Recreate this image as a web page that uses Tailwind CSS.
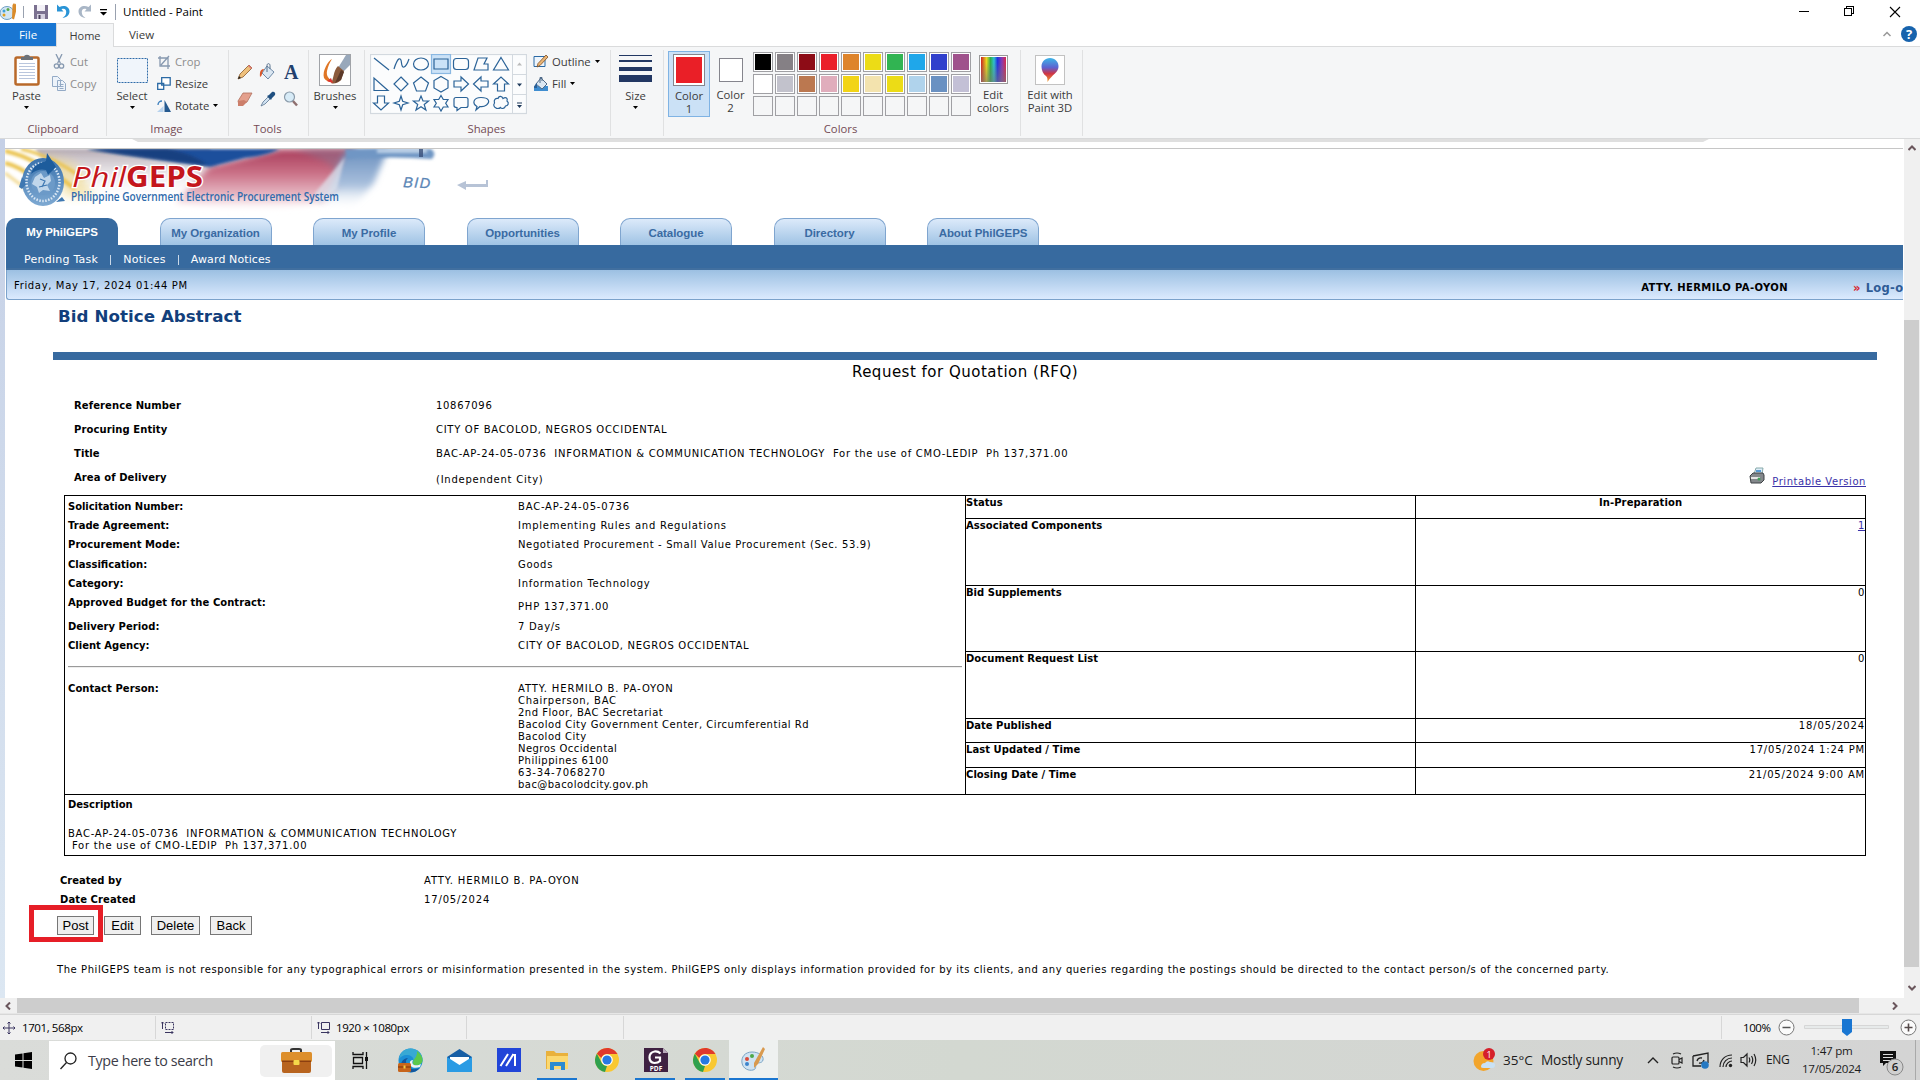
<!DOCTYPE html>
<html lang="en">
<head>
  <meta charset="UTF-8" />
  <meta name="viewport" content="width=device-width, initial-scale=1.0" />
  <title>Untitled - Paint</title>
  <script src="https://cdn.jsdelivr.net/npm/@tailwindcss/browser@4"></script>
</head>
<body class="w-[1920px] h-[1080px] overflow-hidden bg-white text-black font-['Open_Sans',sans-serif] text-[12px] flex flex-col">

  <!-- Title bar -->
  <header class="h-[23px] flex items-center shrink-0">
    <svg class="w-[17px] h-[18px]" viewBox="0 0 17 18"><ellipse cx="7" cy="10" rx="7" ry="6.5" fill="#d3e6f3" stroke="#6fa0c4"/><circle cx="4" cy="8" r="1.5" fill="#3ea0d8"/><circle cx="8" cy="6.5" r="1.5" fill="#58a848"/><circle cx="4" cy="12" r="1.5" fill="#e0a020"/><path d="M12.500 2l1.500-2 1 1.500 1-1v8l-2 8-2-1z" fill="#d98b2b"/></svg>
    <div class="w-px h-[12px] bg-gray-400 ml-[6px]"></div>
    <svg class="w-[14px] h-[14px] ml-[10px]" viewBox="0 0 14 14"><path d="M0 0h14v14H0z" fill="#7b7190"/><path d="M3 0h8v6H3z" fill="#f3f1f7"/><path d="M3 9h8v5H3z" fill="#d5d1e0"/><path d="M4.500 10h2v4h-2z" fill="#4a435e"/></svg>
    <svg class="w-[13px] h-[15px] ml-[9px]" viewBox="0 0 13 15"><path d="M0 .5v7h6.500L4.500 5.200C7.500 4 9.500 5.500 9.200 8.500c-.2 2.500-1.500 4-3.700 5.500C9.500 13.500 12.500 11 12.500 7.500 12.500 2.500 7 .8 2.500 3z" fill="#2a94d6"/></svg>
    <svg class="w-[13px] h-[15px] ml-[8px]" viewBox="0 0 13 15"><path d="M13 .5v7H6.500l2-2.300C5.500 4 3.500 5.500 3.800 8.500c.2 2.500 1.500 4 3.700 5.500C3.500 13.500.5 11 .5 7.500.5 2.500 6 .8 10.500 3z" fill="#a9b6c6"/></svg>
    <svg class="w-[7px] h-[7px] ml-[9px] mt-[2px]" viewBox="0 0 7 7"><path d="M0 0h7v1.200H0zM0 3h7L3.500 6.500z"/></svg>
    <div class="w-px h-[16px] bg-gray-400 ml-[8px]"></div>
    <span class="ml-[7px] text-[11.5px] leading-[22px]">Untitled - Paint</span>
    <svg class="w-[110px] h-[20px] ml-auto mr-[16px]" viewBox="0 0 110 20" fill="none" stroke="#000" shape-rendering="crispEdges"><path d="M5 9.500h10M50.500 6.500h7v7h-7zM52.500 6v-1.500h7v7H58"/><path d="M96 5l10 10M106 5L96 15" shape-rendering="auto" stroke-width="1.100"/></svg>
  </header>

  <!-- Ribbon tabs -->
  <nav class="h-[24px] flex shrink-0 border-b border-[#dadbdc] text-[#3b3b3b]">
    <div class="w-[56px] h-[23px] bg-[#1976d2] text-white text-center leading-[24px] text-[11.5px]">File</div>
    <div class="w-[58px] h-[24px] bg-[#f5f6f7] border-x border-t border-[#dadbdc] text-center leading-[23px] text-[11px]">Home</div>
    <div class="w-[55px] text-center leading-[24px] text-[11.5px]">View</div>
    <svg class="w-[40px] h-[20px] ml-auto mt-[1px]" viewBox="0 0 40 20"><path d="M3.500 12l3.500-3.500 3.500 3.500" fill="none" stroke="#999" stroke-width="1.500"/><circle cx="29" cy="10" r="8" fill="#1763ad"/><text x="29" y="14.500" font-size="13" font-weight="bold" fill="#fff" text-anchor="middle">?</text></svg>
  </nav>

  <!-- Ribbon -->
  <section class="h-[92px] flex shrink-0 bg-[#f5f6f7] border-b border-[#d8d9da] text-[#3b3b3b] text-[11.3px] leading-[13px] pt-[3px]">

    <!-- Clipboard -->
    <div class="w-[107px] h-[86px] border-r border-[#e0e1e2] flex flex-col">
      <div class="flex h-[72px]">
        <div class="w-[53px] flex flex-col items-center pt-[4px]">
          <svg class="w-[26px] h-[32px]" viewBox="0 0 26 32"><rect x="1.500" y="3.500" width="23" height="27" rx="1.500" fill="#fff" stroke="#b9692a" stroke-width="2.500"/><path d="M5 9.500h16M5 12.500h16M5 15.500h16M5 18.500h16M5 21.500h16M5 24.500h16" stroke="#b9c6dd"/><path d="M7 6V3h3c0-3 6-3 6 0h3v3z" fill="#6d7278"/></svg>
          <span class="mt-[3px]">Paste</span>
          <svg class="w-[5px] h-[4px] mt-[4px]" viewBox="0 0 5 4"><path d="M0 0h5L2.500 3z"/></svg>
        </div>
        <div class="flex flex-col gap-[5px] pt-[3px] text-[#8d8d8d]">
          <div class="flex items-center gap-[5px] h-[17px]"><svg class="w-[12px] h-[15px]" viewBox="0 0 12 15" fill="none" stroke="#8799b0" stroke-width="1.300"><path d="M3 0l4.500 9.500M9 0L4.500 9.500"/><circle cx="3.500" cy="12" r="2.200"/><circle cx="8.500" cy="12" r="2.200"/></svg>Cut</div>
          <div class="flex items-center gap-[4px] h-[17px] -ml-[1px]"><svg class="w-[14px] h-[15px]" viewBox="0 0 14 15" fill="#edf3fa" stroke="#93aac6"><path d="M.5.5h5l3 3v7h-8zM5.500 4.500h5l3 3v7h-8zM7.500 8.500h4M7.500 10.500h4M7.500 12.500h4"/></svg>Copy</div>
        </div>
      </div>
      <div class="text-center text-[#744b55]">Clipboard</div>
    </div>

    <!-- Image -->
    <div class="w-[122px] h-[86px] border-r border-[#e0e1e2] flex flex-col">
      <div class="flex h-[72px]">
        <div class="w-[50px] flex flex-col items-center pt-[8px]">
          <svg class="w-[31px] h-[25px]" viewBox="0 0 31 25"><rect x=".5" y=".5" width="30" height="24" fill="#f0f5fb" stroke="#2e6ba8" stroke-dasharray="2 1"/></svg>
          <span class="mt-[6px]">Select</span>
          <svg class="w-[5px] h-[4px] mt-[4px]" viewBox="0 0 5 4"><path d="M0 0h5L2.500 3z"/></svg>
        </div>
        <div class="flex flex-col gap-[5px] pt-[3px]">
          <div class="flex items-center gap-[4px] h-[17px] text-[#8d8d8d]"><svg class="w-[14px] h-[14px]" viewBox="0 0 14 14" fill="none" stroke="#8799b0" stroke-width="1.300"><path d="M3 1v10h10M1 3h10v11M4 10l8-9"/></svg>Crop</div>
          <div class="flex items-center gap-[4px] h-[17px]"><svg class="w-[14px] h-[13px]" viewBox="0 0 14 13" fill="#fff" stroke="#2b6aa5" stroke-width="1.300"><path d="M4.700.7h8.500v7.500H4.700zM.7 6.500h6v6h-6z"/></svg>Resize</div>
          <div class="flex items-center gap-[4px] h-[17px]"><svg class="w-[14px] h-[14px]" viewBox="0 0 14 14"><path d="M7.500 1v12H14z" fill="#24598f"/><path d="M6.500 7v6H0z" fill="#b8d3ee"/><path d="M1 6c0-3 2-4 4-4" fill="none" stroke="#3c7fbd" stroke-width="1.300"/></svg>Rotate<svg class="w-[5px] h-[4px]" viewBox="0 0 5 4"><path d="M0 0h5L2.500 3z"/></svg></div>
        </div>
      </div>
      <div class="text-center text-[#744b55] pr-[2px]">Image</div>
    </div>

    <!-- Tools -->
    <div class="w-[80px] h-[86px] border-r border-[#e0e1e2] flex flex-col">
      <div class="grid grid-cols-3 h-[72px] pl-[4px] pr-[5px] pt-[7px] pb-[10px] items-center justify-items-center">
        <svg class="w-[16px] h-[16px]" viewBox="0 0 16 16"><path d="M1 15l2-5L12 1l3 3-9 9z" fill="#eec07c" stroke="#8c5a2b" stroke-width=".8"/><path d="M1 15l1-3 2 2z" fill="#222"/><path d="M11 2l1-1 3 3-1 1z" fill="#d77"/></svg>
        <svg class="w-[17px] h-[17px]" viewBox="0 0 17 17"><path d="M8 3l7 6-6 7-6-6z" fill="#dbe7f2" stroke="#6f8aa8"/><path d="M8 9V2.500C8 0 11 0 11 2.500V6" fill="none" stroke="#57708c"/><path d="M5 6C2 6 .5 8 1 14c2-1 2-3 2-4z" fill="#d9572b"/></svg>
        <span class="font-['Liberation_Serif',serif] font-bold text-[20px] leading-[20px] text-[#22406e]">A</span>
        <svg class="w-[16px] h-[15px]" viewBox="0 0 16 15"><path d="M6 1h9l-5 9-8 3-1-4z" fill="#e4a08d" stroke="#b0705e" stroke-width=".8"/><path d="M1 9l6-1 3 2-4 4H1z" fill="#cc7f6b"/></svg>
        <svg class="w-[16px] h-[16px]" viewBox="0 0 16 16"><path d="M1 15l2-4 5-5 2 2-5 5z" fill="#cfe1f1" stroke="#5b7591" stroke-width=".8"/><path d="M7 5l2-1 3-3c2-1 4 1 3 3l-3 3-1 2z" fill="#1f4f80"/></svg>
        <svg class="w-[16px] h-[16px]" viewBox="0 0 16 16"><path d="M9.500 9.500l4.500 5" stroke="#8e6f6f" stroke-width="2.500"/><circle cx="6.500" cy="6" r="5" fill="#d7ebf7" stroke="#8b9cab" stroke-width="1.200"/></svg>
      </div>
      <div class="text-center text-[#744b55] pr-[2px]">Tools</div>
    </div>

    <!-- Brushes -->
    <div class="w-[56px] h-[86px] border-r border-[#e0e1e2] flex flex-col items-center pt-[4px] pr-[3px]">
      <svg class="w-[32px] h-[32px]" viewBox="0 0 32 32"><rect x=".5" y=".5" width="31" height="31" fill="#fff" stroke="#a0a3a8"/><path d="M31 1v10l-7 7-5-4L27 1z" fill="#98a8bb"/><path d="M19 12l6 5-3 9c-4 4-8 4-10 3 3-4 2-12 7-17z" fill="#8b5a3c"/><path d="M22 16l3 2-3 8-6 3z" fill="#5c3a2a"/><path d="M13 5c-4 2-10 12-8 19 2 3 6 5 9 4-4-3-7-6-6-11 1-5 3-9 5-12z" fill="#e07626"/><path d="M8 27l4-3 2 5z" fill="#d33"/></svg>
      <span class="mt-[3px]">Brushes</span>
      <svg class="w-[5px] h-[4px] mt-[4px]" viewBox="0 0 5 4"><path d="M0 0h5L2.500 3z"/></svg>
    </div>

    <!-- Shapes -->
    <div class="w-[246px] h-[86px] border-r border-[#e0e1e2] flex flex-col">
      <div class="flex h-[72px] pt-[4px] pl-[5px]">
        <svg class="w-[157px] h-[61px]" viewBox="0 0 157 61" fill="none" stroke="#2b6398" stroke-width="1.200">
          <rect x=".5" y=".5" width="156" height="59" fill="#fbfcfd" stroke="#d3d9df"/>
          <path d="M142.500 1v58M142.500 20.500h14M142.500 40.500h14" stroke="#d3d9df" stroke-width="1"/>
          <rect x="61.500" y=".5" width="19" height="19" fill="#cbe2f7" stroke="#8ab8e2"/>
          <path d="M4 4l15 12"/>
          <path d="M24 15C28 2 31 3 31.500 9s4 6 7.500-4"/>
          <ellipse cx="51" cy="10" rx="7.500" ry="6"/>
          <path d="M64 5h14v10H64z"/>
          <rect x="83.500" y="4.500" width="15" height="11" rx="3"/>
          <path d="M104 16l4-12h9l-3 6h4v6z"/>
          <path d="M131 3.500l7.500 12.500h-15z"/>
          <path d="M4 24v12.500h14z"/>
          <path d="M31 23l7 7-7 7-7-7z"/>
          <path d="M51 23l7.500 6-3 8h-9l-3-8z"/>
          <path d="M71 22.500l7 4v7.500l-7 4-7-4v-7.500z"/>
          <path d="M84 27h7v-4l7.500 7-7.500 7v-4h-7z"/>
          <path d="M118 27h-7v-4l-7.500 7 7.500 7v-4h7z"/>
          <path d="M127.500 37v-7h-4l7.500-7 7.500 7h-4v7z"/>
          <path d="M7.500 42v7h-4l7.500 7 7.500-7h-4v-7z"/>
          <path d="M31 42l1.700 5.300L38 49l-5.300 1.700L31 56l-1.700-5.300L24 49l5.300-1.700z"/>
          <path d="M51 42l2 5h5.500l-4.300 3.500 1.700 5.500-4.900-3.300L46 56l1.700-5.500-4.300-3.500H49z"/>
          <path d="M71 41.500l2.300 4H78l-2.300 3.700L78 53h-4.700L71 57l-2.300-4H64l2.300-3.800L64 45.500h4.700z"/>
          <path d="M86 43.500h10q2 0 2 2v6q0 2-2 2h-5l-4 3v-3q-3 0-3-2v-6q0-2 2-2z"/>
          <path d="M106 56l1-3.500c-5-3-4-9 4-9s9.500 4 5.500 7.500c-2 1.500-4 2-6.500 1.500z"/>
          <path d="M126 54c-2-1-3-3-1.500-5-1-3 1-5 3.500-4.500 1-3 4-2.500 5 0 3-2 5 0 4 2.500 2.500 2 1 5-1.500 5-1 3-4 3-5 1.500-1.500 1.500-4 1-4.500.5z"/>
          <path d="M147 11.500h5l-2.500-3z" fill="#bbb" stroke="none"/>
          <path d="M147 29.500h5l-2.500 3zM147 48.500h5v1h-5zM147 51h5l-2.500 3z" fill="#1e395b" stroke="none"/>
        </svg>
        <div class="flex flex-col gap-[5px] pl-[6px] -mt-px">
          <div class="flex items-center gap-[3px] h-[17px]"><svg class="w-[16px] h-[15px]" viewBox="0 0 16 15"><path d="M1 2.500h11v10H1z" fill="#eef5fc" stroke="#2b6aa5"/><path d="M4 13l1-3.500L13 1l2 2-8 8.500z" fill="#e9b474" stroke="#7f4e25" stroke-width=".8"/></svg>Outline<svg class="w-[5px] h-[4px] ml-[1px]" viewBox="0 0 5 4"><path d="M0 0h5L2.500 3z"/></svg></div>
          <div class="flex items-center gap-[3px] h-[17px]"><svg class="w-[16px] h-[15px]" viewBox="0 0 16 15"><path d="M1 10h14v5H1z" fill="#3f8dd0"/><path d="M8 2l6 6-5 5-6-5z" fill="#dbe7f2" stroke="#4f6a88"/><path d="M7 7V1.500h2V5" fill="none" stroke="#4f6a88"/><path d="M4 7c-2 1-3 3-3 5h3z" fill="#2c6096"/></svg>Fill<svg class="w-[5px] h-[4px] ml-[1px]" viewBox="0 0 5 4"><path d="M0 0h5L2.500 3z"/></svg></div>
        </div>
      </div>
      <div class="text-center text-[#744b55] pr-[2px]">Shapes</div>
    </div>

    <!-- Size -->
    <div class="w-[53px] h-[86px] border-r border-[#e0e1e2] flex flex-col items-center pt-[5px] pr-[3px]">
      <svg class="w-[33px] h-[28px]" viewBox="0 0 33 28" fill="#223763"><path d="M0 0h33v1H0zM0 5h33v2H0zM0 12h33v4H0zM0 20h33v7H0z"/></svg>
      <span class="mt-[6px]">Size</span>
      <svg class="w-[5px] h-[4px] mt-[4px]" viewBox="0 0 5 4"><path d="M0 0h5L2.500 3z"/></svg>
    </div>

    <!-- Colors -->
    <div class="w-[357px] h-[86px] border-r border-[#e0e1e2] flex flex-col">
      <div class="flex h-[72px] pt-px">
        <div class="ml-[4px] w-[42px] h-[66px] bg-[#cbe1f6] border border-[#7fb3e4] flex flex-col items-center text-center pt-[2px]">
          <div class="size-[32px] border border-[#85858d] p-[2px] bg-white"><div class="size-full bg-[#ea1f27]"></div></div>
          <span class="mt-[3px] w-[30px]">Color 1</span>
        </div>
        <div class="w-[41px] flex flex-col items-center text-center pt-[7px]">
          <div class="size-[24px] border border-[#85858d] bg-white"></div>
          <span class="mt-[6px] w-[30px]">Color 2</span>
        </div>
        <div id="palette" class="grid grid-cols-10 gap-[2px] w-[218px] h-[64px] ml-[2px] mt-[1px]"></div>
        <div class="w-[44px] flex flex-col items-center text-center pt-[4px]">
          <div class="size-[29px] border border-[#999] bg-white p-px"><div class="size-full bg-[linear-gradient(to_bottom,transparent_20%,#77777799),linear-gradient(to_right,#c22,#e8d820_22%,#2fae4a_38%,#2fc0d0_52%,#2233dd_66%,#8a3ab0_84%,#d8274a)]"></div></div>
          <span class="mt-[4px]">Edit colors</span>
        </div>
      </div>
      <div class="text-center text-[#744b55] pr-[3px]">Colors</div>
    </div>

    <!-- Paint 3D -->
    <div class="w-[62px] h-[86px] border-r border-[#e0e1e2] flex flex-col items-center text-center pt-[5px] pr-[3px]">
      <svg class="w-[30px] h-[30px]" viewBox="0 0 30 30"><defs><linearGradient id="p3d" x1="0" y1="0" x2="0" y2="1"><stop offset="0" stop-color="#3cb6e8"/><stop offset=".4" stop-color="#5d62d0"/><stop offset=".65" stop-color="#cf3446"/><stop offset="1" stop-color="#f1a02c"/></linearGradient></defs><rect x=".5" y=".5" width="29" height="29" fill="#fff" stroke="#c2c2c2"/><path d="M15 3c5 0 9 4 8.500 9-.5 6-6 7-11 15 0-3 0-4-1-5.500C8 19 6.500 15 6.500 11.500 6.500 7 10 3 15 3z" fill="url(#p3d)"/></svg>
      <span class="mt-[3px] w-[56px]">Edit with Paint 3D</span>
    </div>
  </section>

  <!-- Canvas area -->
  <div class="h-[859px] flex shrink-0">
    <div class="w-[5px] bg-linear-to-b from-[#c5d0e6] to-[#dce7f2]"></div>

    <main class="w-[1898px] bg-white overflow-hidden flex flex-col font-['DejaVu_Sans',sans-serif] text-[10px] leading-[12px] tracking-[0.7px]">
      <svg class="h-[3px] w-[1594px] ml-[127px] shrink-0" viewBox="0 0 1594 3"><path d="M0 0h1577l-6 3H6z" fill="#dfdfdf"/></svg>
      <div class="mt-[6px] h-px bg-[#c6c6c6] shrink-0"></div>

      <!-- Banner -->
      <svg class="w-[540px] h-[69px] shrink-0" viewBox="0 0 540 69">
        <defs>
          <filter id="soft" x="-20%" y="-40%" width="140%" height="180%"><feGaussianBlur stdDeviation="5"/></filter>
          <filter id="soft2" x="-20%" y="-40%" width="140%" height="180%"><feGaussianBlur stdDeviation="1.500"/></filter>
          <filter id="soft3" x="-20%" y="-40%" width="140%" height="180%"><feGaussianBlur stdDeviation="3"/></filter>
          <linearGradient id="globe" x1="0" y1="0" x2="0" y2="1"><stop offset="0" stop-color="#3a72ad"/><stop offset="1" stop-color="#7ea9d2"/></linearGradient>
          <linearGradient id="red" x1="0" y1="0" x2="0" y2="1"><stop offset="0" stop-color="#a83c5a"/><stop offset=".4" stop-color="#cb7288"/><stop offset=".8" stop-color="#ecc6cf"/><stop offset="1" stop-color="#fff" stop-opacity="0"/></linearGradient>
          <linearGradient id="haze" x1="0" y1="0" x2="0" y2="1"><stop offset="0" stop-color="#9a8c98"/><stop offset="1" stop-color="#fff" stop-opacity="0"/></linearGradient>
          <linearGradient id="arm" x1="0" y1="0" x2="0" y2="1"><stop offset="0" stop-color="#6a8fbe"/><stop offset=".6" stop-color="#a9c0dd"/><stop offset="1" stop-color="#fff" stop-opacity="0"/></linearGradient>
        </defs>
        <path d="M30 0h175l10 22-35 30H70z" fill="url(#haze)" filter="url(#soft2)" opacity=".75"/>
        <path d="M40 6l30 8 20 34H60z" fill="#f0d98a" opacity=".6" filter="url(#soft)"/>
        <g fill="none" stroke="#eac24c" filter="url(#soft2)">
          <path d="M0 2Q30 8 70 40" stroke-width="4"/>
          <path d="M0 14Q14 17 30 30" stroke-width="4"/>
          <path d="M16 0Q50 8 78 30" stroke-width="3"/>
          <path d="M0 24l24 18" stroke-width="3" opacity=".6"/>
        </g>
        <path d="M205 17L275 0h75l-4 20-26 34-70 8-80-8z" fill="url(#red)" filter="url(#soft3)"/>
        <path d="M290 0h60l-10 30-20-18z" fill="#8a7390" opacity=".5" filter="url(#soft3)"/>
        <path d="M316 56L340 4l43-4-14 34-22 26z" fill="url(#arm)" filter="url(#soft3)"/>
        <path d="M310 44L340 8l-8 32-18 16z" fill="#dfe4ee" opacity=".7" filter="url(#soft2)"/>
        <path d="M82 0h193q-14 7-35 9l-35 9Q150 10 82 0z" fill="#1b4f9c" filter="url(#soft2)"/>
        <path d="M82 0h80q30 6 40 16Q140 10 82 0z" fill="#163a74" opacity=".7" filter="url(#soft2)"/>
        <path d="M340 0h86q6 4 1 10-40-3-85 0z" fill="#6f96c4" filter="url(#soft2)"/>
        <path d="M372 0h50v4h-50z" fill="#dbe8f5" opacity=".7" filter="url(#soft2)"/>
        <path d="M414 0h4v8h-4z" fill="#3a4f78" opacity=".8"/>
        <ellipse cx="38" cy="33" rx="21" ry="24" fill="url(#globe)"/>
        <path d="M17 40l-3-2 3-10 5 6zM57 48l3 4-9 1z" fill="#3f78b2"/>
        <ellipse cx="38" cy="33" rx="16.500" ry="19" fill="none" stroke="#dbe8f5" stroke-width="2.500" stroke-dasharray="1.500 1.500"/>
        <circle cx="38" cy="34" r="12" fill="#6c9ac8"/>
        <path d="M30 28l6-4 3 5 6-3 1 6-4 4 3 6-7-1-4 3-2-6-5-3z" fill="#cfe0f1" opacity=".85"/>
        <path d="M35 30l5 2-3 6M42 36l-8 2" fill="none" stroke="#3f78b2" stroke-width="1.200"/>
        <path d="M42 4l9 14-8 8-2-5q-8-2-15 4 2-10 15-13z" fill="#1d5c9c"/>
        <g font-family="Open Sans, sans-serif" letter-spacing="0">
          <text x="67" y="38" font-size="28" font-style="italic" font-weight="500" fill="#c4161c" stroke="#fff" stroke-width="2.500" paint-order="stroke" textLength="54" lengthAdjust="spacingAndGlyphs">Phil</text>
          <text x="121" y="38" font-size="28" font-weight="bold" fill="#c4161c" stroke="#fff" stroke-width="2.500" paint-order="stroke" textLength="77" lengthAdjust="spacingAndGlyphs">GEPS</text>
          <text x="66" y="51.500" font-size="12" font-weight="600" fill="#2f6bac" textLength="268" lengthAdjust="spacingAndGlyphs">Philippine Government Electronic Procurement System</text>
        </g>
        <text x="398" y="38" font-family="Liberation Sans, sans-serif" font-size="14.500" font-style="italic" fill="#5b86b6" stroke="#5b86b6" stroke-width=".3" letter-spacing="0" textLength="27" transform="rotate(3 398 38)">BID</text>
        <path d="M452 36l9-4v3h20v-4h2v7h-22v3z" fill="#b7c3d6"/>
      </svg>

      <!-- Main tabs -->
      <div class="h-[27px] flex gap-[41.5px] pl-px shrink-0 font-['Liberation_Sans',sans-serif] font-bold text-[11.5px] leading-[28px] tracking-[-0.05px] text-center text-[#3a6ba3]">
        <div class="w-[112px] rounded-t-[10px] bg-[#376a9f] text-white">My PhilGEPS</div>
        <div class="w-[112px] rounded-t-[10px] border border-b-0 border-[#7fa5cf] bg-linear-to-b from-[#dceafa] to-[#9fc3e4]">My Organization</div>
        <div class="w-[112px] rounded-t-[10px] border border-b-0 border-[#7fa5cf] bg-linear-to-b from-[#dceafa] to-[#9fc3e4]">My Profile</div>
        <div class="w-[112px] rounded-t-[10px] border border-b-0 border-[#7fa5cf] bg-linear-to-b from-[#dceafa] to-[#9fc3e4]">Opportunities</div>
        <div class="w-[112px] rounded-t-[10px] border border-b-0 border-[#7fa5cf] bg-linear-to-b from-[#dceafa] to-[#9fc3e4]">Catalogue</div>
        <div class="w-[112px] rounded-t-[10px] border border-b-0 border-[#7fa5cf] bg-linear-to-b from-[#dceafa] to-[#9fc3e4]">Directory</div>
        <div class="w-[112px] rounded-t-[10px] border border-b-0 border-[#7fa5cf] bg-linear-to-b from-[#dceafa] to-[#9fc3e4]">About PhilGEPS</div>
      </div>
      <div class="h-[25px] ml-px bg-[#376a9f] border-b-2 border-[#416f9f] flex items-center pt-[6px] pl-[18px] text-white text-[11px] tracking-[0.25px] shrink-0">
        <span>Pending Task</span>
        <span class="w-px h-[10px] bg-[#c9d8e8] ml-[12px] mr-[12px]"></span>
        <span>Notices</span>
        <span class="w-px h-[10px] bg-[#c9d8e8] mx-[12px]"></span>
        <span class="tracking-[0.1px]">Award Notices</span>
      </div>
      <div class="h-[30px] ml-px border-l border-b border-[#7ba2cb] rounded-bl-[3px] bg-linear-to-b from-[#9cc0e2] to-[#dbeafe] flex items-center pl-[7px] shrink-0 whitespace-nowrap">
        <span class="pt-[2px] tracking-[0.65px]">Friday, May 17, 2024 01:44 PM</span>
        <span class="ml-auto font-bold tracking-[0.4px] pt-[6px]">ATTY. HERMILO PA-OYON</span>
        <span class="w-[50px] ml-[65px] pt-[6px] font-bold text-[11.5px] text-[#2f5c96] tracking-[0.3px]"><span class="text-[#d8252c] mr-[5px]">»</span>Log-o</span>
      </div>

      <h1 class="mt-[6px] h-[46px] pl-[53px] font-bold text-[16.7px] leading-[20px] tracking-[0.05px] text-[#123f7c] shrink-0">Bid Notice Abstract</h1>
      <div class="h-[8px] w-[1824px] ml-[48px] bg-[#376a9f] shrink-0"></div>
      <div class="h-[34px] w-[1824px] ml-[48px] pt-[2px] text-center text-[15px] leading-[20px] tracking-[0.5px] shrink-0">Request for Quotation (RFQ)</div>

      <!-- Summary rows -->
      <div class="ml-[69px] w-[1792px] h-[101px] grid grid-cols-[362px_1fr_auto] auto-rows-[24px] leading-[24px] whitespace-pre shrink-0">
        <b class="tracking-[0.1px]">Reference Number</b><span>10867096</span><span></span>
        <b class="tracking-[0.1px]">Procuring Entity</b><span>CITY OF BACOLOD, NEGROS OCCIDENTAL</span><span></span>
        <b class="tracking-[0.1px]">Title</b><span class="tracking-[0.72px]">BAC-AP-24-05-0736  INFORMATION &amp; COMMUNICATION TECHNOLOGY  For the use of CMO-LEDIP  Ph 137,371.00</span><span></span>
        <b class="tracking-[0.1px]">Area of Delivery</b><span class="pt-[2px] tracking-[0.75px]">(Independent City)</span>
        <span class="flex gap-[7px]">
          <svg class="w-[16px] h-[17px] mt-[1px]" viewBox="0 0 16 17"><path d="M5 7L7 1h7l-1 6z" fill="#dcecf8" stroke="#8aa"/><path d="M7 4h5" stroke="#2b7fc9" stroke-width="1.500"/><path d="M1 9l3-3h10l1 2v5l-3 3H2z" fill="#84888c" stroke="#3d4144"/><path d="M2 10h9v2H2z" fill="#e6e6e6"/><circle cx="10" cy="12" r="1.500" fill="#3f9e58"/></svg>
          <a class="pt-[4px] underline text-[#3a31a8] tracking-[0.55px]">Printable Version</a>
        </span>
      </div>

      <!-- Notice table -->
      <div class="ml-[59px] w-[1802px] h-[361px] border border-black flex flex-col shrink-0">
        <div class="flex h-[298px]">
          <div class="w-[900px] pl-[3px] pt-px whitespace-nowrap">
            <div class="grid grid-cols-[450px_1fr] leading-[19px]">
              <b class="tracking-[-0.05px]">Solicitation Number:</b><span class="tracking-[0.8px]">BAC-AP-24-05-0736</span>
              <b class="tracking-normal">Trade Agreement:</b><span class="tracking-[0.74px]">Implementing Rules and Regulations</span>
              <b class="tracking-[0.05px]">Procurement Mode:</b><span class="h-[20px] tracking-[0.63px]">Negotiated Procurement - Small Value Procurement (Sec. 53.9)</span>
              <b class="tracking-normal">Classification:</b><span>Goods</span>
              <b class="tracking-[0.05px]">Category:</b><span>Information Technology</span>
              <b class="tracking-[0.05px]">Approved Budget for the Contract:</b><span class="h-[24px] pt-[4px] tracking-[0.8px]">PHP 137,371.00</span>
              <b class="tracking-[0.05px]">Delivery Period:</b><span>7 Day/s</span>
              <b class="tracking-normal">Client Agency:</b><span>CITY OF BACOLOD, NEGROS OCCIDENTAL</span>
            </div>
            <div class="mt-[11px] mr-[3px] h-[2px] bg-[#9a9a9a] border-b border-[#eee]"></div>
            <div class="grid grid-cols-[450px_1fr] mt-[15px]">
              <b class="tracking-[0.05px]">Contact Person:</b>
              <address class="not-italic tracking-[0.53px]"><span class="tracking-[0.88px]">ATTY. HERMILO B. PA-OYON</span><br><span class="tracking-[0.7px]">Chairperson, BAC</span><br><span class="tracking-[0.5px]">2nd Floor, BAC Secretariat</span><br>Bacolod City Government Center, Circumferential Rd<br><span class="tracking-[0.5px]">Bacolod City</span><br><span class="tracking-[0.45px]">Negros Occidental</span><br>Philippines 6100<br><span class="tracking-[0.8px]">63-34-7068270</span><br><span class="tracking-[0.45px]">bac@bacolodcity.gov.ph</span></address>
            </div>
          </div>
          <div class="w-[900px] border-l border-black grid grid-cols-[450px_1fr] grid-rows-[23px_67px_66px_67px_24px_25px_26px] leading-[14px]">
            <b class="border-b border-r tracking-normal">Status</b><b class="border-b text-center tracking-[0.1px]">In-Preparation</b>
            <b class="border-b border-r tracking-[0.05px]">Associated Components</b><span class="border-b text-right"><a class="underline text-[#3a31a8]">1</a></span>
            <b class="border-b border-r tracking-normal">Bid Supplements</b><span class="border-b text-right">0</span>
            <b class="border-b border-r tracking-[0.05px]">Document Request List</b><span class="border-b text-right">0</span>
            <b class="border-b border-r tracking-normal">Date Published</b><span class="border-b text-right tracking-[0.85px]">18/05/2024</span>
            <b class="border-b border-r tracking-[0.05px]">Last Updated / Time</b><span class="border-b text-right tracking-[0.8px]">17/05/2024 1:24 PM</span>
            <b class="border-r tracking-[0.05px]">Closing Date / Time</b><span class="text-right tracking-[0.8px]">21/05/2024 9:00 AM</span>
          </div>
        </div>
        <div class="flex-1 border-t border-black pl-[3px] pt-[4px]">
          <b class="block tracking-normal">Description</b>
          <p class="mt-[17px] whitespace-pre tracking-[0.72px]">BAC-AP-24-05-0736  INFORMATION &amp; COMMUNICATION TECHNOLOGY</p>
          <p class="pl-[4px] whitespace-pre tracking-[0.72px]">For the use of CMO-LEDIP  Ph 137,371.00</p>
        </div>
      </div>

      <div class="mt-[15px] pl-[55px] grid grid-cols-[364px_1fr] leading-[19px] shrink-0">
        <b class="tracking-normal">Created by</b><span class="tracking-[0.88px]">ATTY. HERMILO B. PA-OYON</span>
        <b class="tracking-[0.1px]">Date Created</b><span class="tracking-[0.85px]">17/05/2024</span>
      </div>

      <!-- Buttons, the first one is boxed in red -->
      <div class="relative mt-[7px] pl-[52px] flex h-[19px] shrink-0 font-['Liberation_Sans',sans-serif] text-[13px] tracking-normal leading-[17px]">
        <button class="w-[37px] border border-[#767676] bg-[#efefef]">Post</button>
        <button class="w-[37px] ml-[10px] border border-[#767676] bg-[#efefef]">Edit</button>
        <button class="w-[49px] ml-[10px] border border-[#767676] bg-[#efefef]">Delete</button>
        <button class="w-[42px] ml-[10px] border border-[#767676] bg-[#efefef]">Back</button>
        <div class="absolute left-[24px] top-[-11px] w-[74px] h-[37px] border-[5px] border-[#e61e27]"></div>
      </div>

      <p class="mt-[29px] pl-[52px] shrink-0 whitespace-nowrap tracking-[0.565px]">The PhilGEPS team is not responsible for any typographical errors or misinformation presented in the system. PhilGEPS only displays information provided for by its clients, and any queries regarding the postings should be directed to the contact person/s of the concerned party.</p>
    </main>

    <!-- Vertical scrollbar -->
    <div class="ml-auto w-[16px] bg-[#f0f0f0] flex flex-col items-center">
      <svg class="w-[8px] h-[6px] mt-[6px]" viewBox="0 0 8 6"><path d="M.5 5L4 1.500 7.500 5" fill="none" stroke="#6a565c" stroke-width="2"/></svg>
      <div class="mt-[169px] w-[15px] h-[647px] bg-[#cdcdcd] self-start"></div>
      <svg class="w-[8px] h-[6px] mt-[18px]" viewBox="0 0 8 6"><path d="M.5 1L4 4.500 7.500 1" fill="none" stroke="#6a565c" stroke-width="2"/></svg>
    </div>
  </div>

  <!-- Horizontal scrollbar -->
  <div class="h-[16px] shrink-0 bg-[#f0f0f0] flex items-center border-b border-[#e6e6e6]">
    <svg class="w-[6px] h-[8px] ml-[5px]" viewBox="0 0 6 8"><path d="M5 .5L1.500 4 5 7.500" fill="none" stroke="#6a565c" stroke-width="2"/></svg>
    <div class="ml-[6px] w-[1842px] h-[15px] bg-[#cdcdcd]"></div>
    <svg class="w-[6px] h-[8px] ml-[33px]" viewBox="0 0 6 8"><path d="M1 .5L4.500 4 1 7.500" fill="none" stroke="#6a565c" stroke-width="2"/></svg>
  </div>

  <!-- Status bar -->
  <div class="h-[26px] shrink-0 bg-[#f0f0f0] border-t border-[#d7d7d7] flex items-center text-[11.5px] tracking-[-0.4px]">
    <div class="w-[156px] h-[23px] border-r border-[#d7d7d7] flex items-center pl-[3px] gap-[7px]">
      <svg class="w-[12px] h-[12px]" viewBox="0 0 12 12" fill="none" stroke="#3a3560"><path d="M6 0v12M0 6h12M4.500 1.500L6 0l1.500 1.500M4.500 10.500L6 12l1.500-1.500M1.500 4.500L0 6l1.500 1.500M10.500 4.500L12 6l-1.500 1.500"/></svg>
      <span>1701, 568px</span>
    </div>
    <div class="w-[156px] h-[23px] border-r border-[#d7d7d7] flex items-center pl-[5px]">
      <svg class="w-[14px] h-[13px]" viewBox="0 0 14 13" fill="none" stroke="#3a3560"><path d="M1.500 1v7M0 2.500L1.500 1 3 2.500M4 11.500h8M10.500 10l1.500 1.500-1.500 1.500"/><path d="M4.500 1.500h8v7h-8z" stroke-dasharray="2 1"/></svg>
    </div>
    <div class="w-[155px] h-[23px] border-r border-[#d7d7d7] flex items-center pl-[5px] gap-[5px]">
      <svg class="w-[14px] h-[13px]" viewBox="0 0 14 13" fill="none" stroke="#3a3560"><path d="M1.500 1v7M0 2.500L1.500 1 3 2.500M4 11.500h8M10.500 10l1.500 1.500-1.500 1.500M4.500 1.500h8v7h-8z"/></svg>
      <span>1920 × 1080px</span>
    </div>
    <div class="w-[157px] h-[23px] border-r border-[#d7d7d7]"></div>
    <div class="ml-auto w-[199px] h-[23px] border-l border-[#d7d7d7] flex items-center pl-[21px]">
      <span class="w-[35px]">100%</span>
      <svg class="w-[17px] h-[17px]" viewBox="0 0 17 17"><circle cx="8.500" cy="8.500" r="7.500" fill="#fbfbfb" stroke="#777"/><path d="M4.500 8.500h8" stroke="#555" stroke-width="1.500"/></svg>
      <svg class="w-[85px] h-[19px] ml-[9px]" viewBox="0 0 85 19"><path d="M.5 7.500h84v3H.5z" fill="#e7eaea" stroke="#d6d6d6"/><path d="M38 1h10v13l-5 4-5-4z" fill="#1976d2"/></svg>
      <svg class="w-[17px] h-[17px] ml-[11px]" viewBox="0 0 17 17"><circle cx="8.500" cy="8.500" r="7.500" fill="#fbfbfb" stroke="#777"/><path d="M4.500 8.500h8M8.500 4.500v8" stroke="#554a4a" stroke-width="1.600"/></svg>
    </div>
  </div>

  <!-- Taskbar -->
  <footer class="h-[40px] shrink-0 bg-linear-to-r from-[#dadcd9] via-[#d3d8d1] to-[#d4d4d4] flex items-stretch">
    <div class="w-[49px] flex items-center pl-[15px]">
      <svg class="w-[17px] h-[17px]" viewBox="0 0 17 17"><path d="M0 2.500L7.500 1.500V8H0zM8.500 1.300L17 0v8H8.500zM0 9h7.500v6.500L0 14.500zM8.500 9H17v8l-8.500-1.200z"/></svg>
    </div>
    <div class="w-[286px] mt-px bg-white flex items-center">
      <svg class="w-[17px] h-[18px] ml-[11px]" viewBox="0 0 17 18" fill="none" stroke="#222" stroke-width="1.300"><circle cx="10.500" cy="6.500" r="5.500"/><path d="M6.500 10.500L.5 17"/></svg>
      <span class="ml-[11px] text-[14.3px] tracking-[-0.35px] text-[#3c3c48]">Type here to search</span>
      <div class="ml-auto mr-[3px] w-[72px] h-[32px] rounded-[5px] bg-[#f0f0f0] flex items-center justify-center">
        <svg class="w-[31px] h-[25px]" viewBox="0 0 31 25"><path d="M10 4V2q0-1 2-1h6q2 0 2 1v2" fill="none" stroke="#333" stroke-width="2"/><rect y="4" width="31" height="10" rx="1.500" fill="#dd8f2c"/><path d="M1 13h29v10q0 2-2 2H3q-2 0-2-2z" fill="#b8641f"/><path d="M1 12.500h29v1.500H1z" fill="#8c3f10"/><rect x="12.500" y="12" width="6" height="5" rx="1" fill="#f5d84a"/></svg>
      </div>
    </div>
    <div class="w-[50px] flex items-center justify-center">
      <svg class="w-[17px] h-[17px]" viewBox="0 0 17 17" fill="none" stroke="#111" stroke-width="1.300"><path d="M1 0v2.500h10V0M1 17v-2.500h10V17M1.500 5.500h9v6h-9zM14.500 0v17"/><path d="M13 5h3v4h-3z" fill="#111" stroke="none"/></svg>
    </div>
    <div class="w-[50px] flex items-center justify-center">
      <svg class="w-[25px] h-[25px]" viewBox="0 0 25 25"><circle cx="12.500" cy="12.500" r="12" fill="#1b8fd6"/><path d="M12.500.5C20 .5 25 6 24.500 12c0 4-4 6-8 5-3-1-1-3-1-5 0-3-3-5-7-5-3 0-6 2-7.500 4C2 5 6 .5 12.500.5z" fill="#38a9d4"/><path d="M19 3c4 3 6 7 5.500 10-.5 3-4 5-8 4-3-1-1-3-1-5 2-2 4-5 3.500-9z" fill="#5cc84c"/><path d="M8 13c0 7 6 10 14 7-5 6-15 5-18 0-2-5 0-9 6-10-1 1-2 2-2 3z" fill="#14569c"/><path d="M15 12c-1 2-1 4 1 5 2 .7 5 .3 7-1l-1 3c-6 2-11 0-10-5 .3-1 1-2 3-2z" fill="#eef3f2"/><rect y="15" width="13" height="9" rx="1.500" fill="#c7651c"/><path d="M0 18.500h13v1H0z" fill="#7d3509"/><path d="M5.500 17.500h2v3h-2z" fill="#f5c842"/></svg>
    </div>
    <div class="w-[49px] flex items-center justify-center">
      <svg class="w-[25px] h-[23px]" viewBox="0 0 25 23"><path d="M0 8L12.500 0 25 8v5H0z" fill="#175fa5"/><path d="M3 8h19v8H3z" fill="#fff"/><path d="M0 8l12.500 8L25 8v15H0z" fill="#2a9be4"/></svg>
    </div>
    <div class="w-[49px] flex items-center justify-center">
      <svg class="w-[24px] h-[24px]" viewBox="0 0 24 24"><path d="M0 0h24v24H0z" fill="#2145d8"/><path d="M3.500 18L11 6M9 18l7.500-12" fill="none" stroke="#fff" stroke-width="2"/><path d="M15 6h4v12h-2V8z" fill="#fff"/></svg>
    </div>
    <div class="w-[49px] flex items-center justify-center relative">
      <svg class="w-[23px] h-[20px]" viewBox="0 0 23 20"><path d="M0 1h8l2 2h12v16H0z" fill="#e9b13c"/><path d="M1 6h21v13H1z" fill="#fbd870"/><path d="M4 12h15v8h-4v-4H8v4H4z" fill="#2c8bd0"/></svg>
      <div class="absolute bottom-0 left-[4px] w-[40px] h-[2px] bg-[#1a76d0]"></div>
    </div>
    <div class="w-[49px] flex items-center justify-center">
      <svg class="w-[24px] h-[24px]" viewBox="0 0 24 24"><circle cx="12" cy="12" r="12" fill="#f9c832"/><path d="M12 0c4.500 0 8.500 2.500 10.400 6H12a6 6 0 0 0-5.600 4L1.900 5.700A12 12 0 0 1 12 0z" fill="#e0392d"/><path d="M1.900 5.700L6.800 15c1.200 2 3 3 5.200 3l-2 6A12 12 0 0 1 1.900 5.700z" fill="#2fa04e"/><circle cx="12" cy="12" r="5.800" fill="#fff"/><circle cx="12" cy="12" r="4.600" fill="#2779e2"/></svg>
    </div>
    <div class="w-[49px] flex items-center justify-center relative">
      <svg class="w-[24px] h-[24px]" viewBox="0 0 24 24"><path d="M0 0h19l5 5v19H0z" fill="#3f2142"/><path d="M19 0v5h5z" fill="#b9a9bb"/><path d="M16.500 5.500Q14 3 10.500 3.500 5.500 4.500 5.500 9.500q0 5 5 5.500 3.500 0 5.500-2V9.500h-5" fill="none" stroke="#fff" stroke-width="2.200"/><text x="12" y="22.800" font-size="6.500" font-weight="bold" fill="#fff" text-anchor="middle" font-family="Open Sans, sans-serif">PDF</text></svg>
      <div class="absolute bottom-0 left-[4px] w-[40px] h-[2px] bg-[#1a76d0]"></div>
    </div>
    <div class="w-[49px] flex items-center justify-center relative">
      <svg class="w-[24px] h-[24px]" viewBox="0 0 24 24"><circle cx="12" cy="12" r="12" fill="#f9c832"/><path d="M12 0c4.500 0 8.500 2.500 10.400 6H12a6 6 0 0 0-5.600 4L1.900 5.700A12 12 0 0 1 12 0z" fill="#e0392d"/><path d="M1.900 5.700L6.800 15c1.200 2 3 3 5.200 3l-2 6A12 12 0 0 1 1.900 5.700z" fill="#2fa04e"/><circle cx="12" cy="12" r="5.800" fill="#fff"/><circle cx="12" cy="12" r="4.600" fill="#2779e2"/></svg>
      <div class="absolute bottom-0 left-[5px] w-[40px] h-[2px] bg-[#1a76d0]"></div>
    </div>
    <div class="w-[49px] flex items-center justify-center bg-[#eef1f0] border-b-2 border-[#1a76d0]">
      <svg class="w-[25px] h-[25px]" viewBox="0 0 25 25"><path d="M11 5C4 5 0 10 1 16s7 8 11 7 2-4 3-6 6 0 7-4-4-8-11-8z" fill="#cfe3f2" stroke="#7aa3c4"/><circle cx="6" cy="12" r="2" fill="#d94a3a"/><circle cx="11" cy="9" r="2" fill="#4da84a"/><circle cx="6" cy="17" r="2" fill="#3b83cc"/><path d="M22 0l2 2-7 15-4 4 0-5z" fill="#d99a4e"/></svg>
    </div>

    <!-- Tray -->
    <div class="ml-auto flex items-center text-[14px] text-[#1c1c1c] w-[447px]">
      <svg class="w-[23px] h-[24px]" viewBox="0 0 23 24"><circle cx="10.500" cy="13" r="10" fill="#f2a52c"/><path d="M8 19q0-4 4-4 2-3 5-1 5 0 5 3 0 3-3 3h-8q-3 0-3-1z" fill="#c9e2f5"/><circle cx="16" cy="6" r="6" fill="#d5202a"/><text x="16" y="9.500" font-size="9" fill="#fff" text-anchor="middle">1</text></svg>
      <span class="ml-[7px] w-[38px] text-[13.500px]">35°C</span>
      <span class="w-[106px] text-[13.700px] tracking-[-0.2px] whitespace-nowrap">Mostly sunny</span>
      <svg class="w-[12px] h-[8px]" viewBox="0 0 12 8" fill="none" stroke="#222" stroke-width="1.400"><path d="M1 7l5-5 5 5"/></svg>
      <svg class="w-[12px] h-[17px] ml-[12px]" viewBox="0 0 12 17" fill="none" stroke="#222" stroke-width="1.200"><rect x="1" y="5" width="7" height="7" rx="1"/><path d="M8 7.500L11 6v5L8 9.500M2 2q4-2 8 0M2 15q4 2 8 0"/></svg>
      <svg class="w-[18px] h-[17px] ml-[9px]" viewBox="0 0 18 17" fill="none" stroke="#222" stroke-width="1.300"><path d="M1 4l15-3v10M1 4v10h8M5 9q1-4 5-3M12 8q-1 4-5 3"/><circle cx="13" cy="13" r="3.800" fill="#2679c2" stroke="none"/></svg>
      <svg class="w-[14px] h-[15px] ml-[9px]" viewBox="0 0 14 15" fill="none" stroke="#222" stroke-width="1.200"><path d="M1 14C1 7 6 2 13 2M4 14c0-5 4-9 9-9M7 14c0-3 3-6 6-6"/><circle cx="11.500" cy="12.500" r="1.700" fill="#222" stroke="none"/></svg>
      <svg class="w-[17px] h-[16px] ml-[7px]" viewBox="0 0 17 16" fill="none" stroke="#222" stroke-width="1.200"><path d="M1 5.500h2.500L7 2v12l-3.500-3.500H1zM9 5.500q1.500 2.500 0 5M11.500 4q2.500 4 0 8M14 2q3.500 6 0 12"/></svg>
      <span class="ml-[9px] w-[35px] text-[12px] tracking-[-0.4px]">ENG</span>
      <div class="w-[61px] text-center text-[11.600px] leading-[18px] tracking-[-0.25px] whitespace-nowrap"><div>1:47 pm</div><div>17/05/2024</div></div>
      <svg class="w-[26px] h-[28px] ml-[17px] mt-[6px]" viewBox="0 0 26 28"><path d="M1 2h16v12H7l-3 3v-3H1z" fill="#111"/><path d="M4 5.500h10M4 8.500h10M4 11.500h7" stroke="#ddd"/><circle cx="16" cy="18" r="8" fill="#d0d0d0" stroke="#888"/><text x="16" y="22.200" font-size="11.500" font-weight="600" fill="#222" text-anchor="middle">6</text></svg>
      <div class="ml-auto mr-[4px] w-px h-full bg-[#a9a9a9]"></div>
    </div>
  </footer>

  <script>
    const colors = [
      "#000000", "#858085", "#8d0c16", "#ea1f2a", "#de842b", "#ecdc16", "#31b452", "#1fa7ea", "#3040cc", "#9f528c",
      "#ffffff", "#c2c2cc", "#bb7850", "#e0adbc", "#f2d416", "#f3e3ae", "#ecdc16", "#b0d3ec", "#6a91c2", "#c3c0d6",
    ];
    const palette = document.getElementById("palette");
    for (let i = 0; i < 30; i++) {
      const cell = document.createElement("div");
      cell.className = "size-[20px] border border-[#a0a0a4] p-px";
      if (colors[i]) {
        cell.classList.add("bg-white");
        cell.innerHTML = `<div class="size-full" style="background:${colors[i]}"></div>`;
      }
      palette.appendChild(cell);
    }
  </script>
</body>
</html>
